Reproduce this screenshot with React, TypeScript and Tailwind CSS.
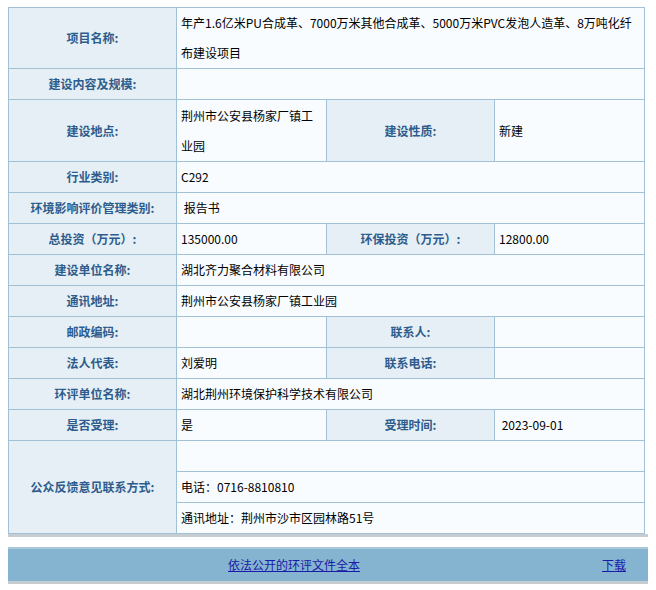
export default function App() {
  const L = "bg-[#e5eff5] border border-[#a3c1d6] text-center font-bold text-[#2d5c8c] text-[12px]";
  const V = "bg-[#f8fcff] border border-[#a3c1d6] text-left text-[12px] text-black px-1";
  const h = "h-[31px]";
  return (
    <div className="w-[656px] h-[590px] bg-white pt-[7px] px-[8px]" style={{ fontFamily: '"Noto Sans CJK SC", "Liberation Sans", sans-serif' }}>
      <div className="border-b-[3px] border-[#c5cdd3]">
        <table className="w-[636px] border-collapse table-fixed">
          <colgroup>
            <col className="w-[168px]" />
            <col className="w-[150px]" />
            <col className="w-[168px]" />
            <col className="w-[150px]" />
          </colgroup>
          <tbody>
            <tr className="h-[61px]">
              <td className={L}>项目名称:</td>
              <td className={V + " leading-[30px]"} colSpan={3}>年产1.6亿米PU合成革、7000万米其他合成革、5000万米PVC发泡人造革、8万吨化纤布建设项目</td>
            </tr>
            <tr className={h}><td className={L}>建设内容及规模:</td><td className={V} colSpan={3}></td></tr>
            <tr className="h-[62px]">
              <td className={L}>建设地点:</td>
              <td className={V + " leading-[30px]"}>荆州市公安县杨家厂镇工业园</td>
              <td className={L}>建设性质:</td>
              <td className={V}>新建</td>
            </tr>
            <tr className={h}><td className={L}>行业类别:</td><td className={V} colSpan={3}>C292</td></tr>
            <tr className={h}><td className={L}>环境影响评价管理类别:</td><td className={V} colSpan={3}>&nbsp;报告书</td></tr>
            <tr className={h}>
              <td className={L}>总投资（万元）:</td><td className={V}>135000.00</td>
              <td className={L}>环保投资（万元）:</td><td className={V}>12800.00</td>
            </tr>
            <tr className={h}><td className={L}>建设单位名称:</td><td className={V} colSpan={3}>湖北齐力聚合材料有限公司</td></tr>
            <tr className={h}><td className={L}>通讯地址:</td><td className={V} colSpan={3}>荆州市公安县杨家厂镇工业园</td></tr>
            <tr className={h}>
              <td className={L}>邮政编码:</td><td className={V}></td>
              <td className={L}>联系人:</td><td className={V}></td>
            </tr>
            <tr className={h}>
              <td className={L}>法人代表:</td><td className={V}>刘爱明</td>
              <td className={L}>联系电话:</td><td className={V}></td>
            </tr>
            <tr className={h}><td className={L}>环评单位名称:</td><td className={V} colSpan={3}>湖北荆州环境保护科学技术有限公司</td></tr>
            <tr className={h}>
              <td className={L}>是否受理:</td><td className={V}>是</td>
              <td className={L}>受理时间:</td><td className={V}>&nbsp;2023-09-01</td>
            </tr>
            <tr className={h}><td className={L} rowSpan={3}>公众反馈意见联系方式:</td><td className={V} colSpan={3}></td></tr>
            <tr className={h}><td className={V} colSpan={3}>电话：0716-8810810</td></tr>
            <tr className={h}><td className={V} colSpan={3}>通讯地址：荆州市沙市区园林路51号</td></tr>
          </tbody>
        </table>
      </div>
      <div className="mt-[10px] border-b-[3px] border-[#c5cdd3] border-t-[2px] border-t-[#a9c9dc]">
        <div className="h-[32px] bg-[#84b4d0] flex items-center text-[12px]">
          <a className="ml-[220px] text-[#1a1aa6] underline">依法公开的环评文件全本</a>
          <a className="ml-auto mr-[22px] text-[#1a1aa6] underline">下载</a>
        </div>
      </div>
    </div>
  );
}
